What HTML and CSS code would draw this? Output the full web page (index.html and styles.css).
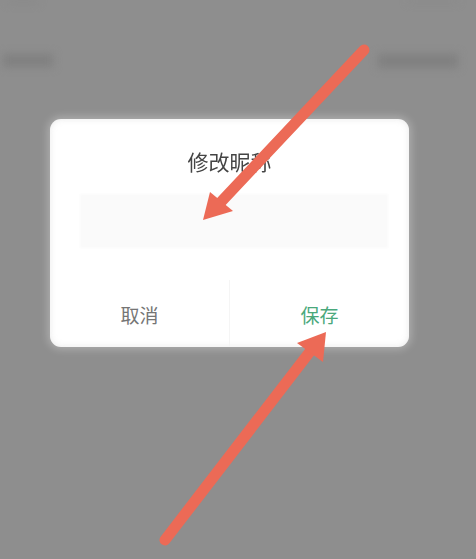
FILE: index.html
```html
<!DOCTYPE html>
<html lang="zh">
<head>
    <meta charset="UTF-8">
    <meta name="viewport" content="width=device-width, initial-scale=1.0">
    <title>修改昵称</title>
    <link rel="stylesheet" href="styles.css">
</head>
<body>
    <div class="page">
        <div class="top-row">
            <span class="smudge smudge-top-left"></span>
            <span class="smudge smudge-top-right"></span>
        </div>
        <div class="setting-row">
            <span class="smudge smudge-label"></span>
            <span class="smudge smudge-value"></span>
        </div>

        <div class="dialog">
            <h1 class="dialog-title">修改昵称</h1>
            <div class="dialog-input"></div>
            <div class="dialog-actions">
                <button class="action action-cancel">取消</button>
                <button class="action action-save">保存</button>
            </div>
        </div>

        <!-- 标注箭头 -->
        <svg class="arrows" viewBox="0 0 476 559" width="476" height="559">
            <line class="arrow-shaft" x1="364" y1="50" x2="220" y2="203"/>
            <polygon class="arrow-head" points="203,220 210,192 233,211"/>
            <line class="arrow-shaft" x1="165" y1="540" x2="312" y2="349"/>
            <polygon class="arrow-head" points="326,332 297,343 323,362"/>
        </svg>
    </div>
</body>
</html>
```

FILE: styles.css
```css
* {
    margin: 0;
    padding: 0;
    box-sizing: border-box;
}

body {
    font-family: "Noto Sans CJK SC", "Noto Sans", sans-serif;
    background: #8e8e8e;
}

.page {
    position: relative;
    width: 476px;
    height: 559px;
    overflow: hidden;
    background: #8e8e8e;
}

.top-row,
.setting-row {
    display: flex;
    justify-content: space-between;
}

.top-row {
    height: 4px;
    padding: 0 18px 0 8px;
}

.setting-row {
    height: 115px;
    padding: 50px 18px 0 3px;
}

.smudge {
    display: block;
    background: #808080;
    filter: blur(4px);
}

.smudge-top-left {
    width: 30px;
    height: 3px;
    background: #868686;
}

.smudge-top-right {
    width: 50px;
    height: 2px;
    background: #868686;
}

.smudge-label {
    width: 50px;
    height: 13px;
}

.smudge-value {
    width: 80px;
    height: 14px;
}

.dialog {
    width: 359px;
    height: 228px;
    margin-left: 50px;
    background: #fff;
    border-radius: 11px;
    box-shadow: 0 0 9px 2px rgba(255, 255, 255, 0.3), inset 0 0 6px rgba(190, 190, 190, 0.35);
    display: flex;
    flex-direction: column;
}

.dialog-title {
    margin-top: 27px;
    height: 30px;
    font-size: 21px;
    font-weight: 400;
    line-height: 30px;
    text-align: center;
    color: #444;
    filter: blur(0.3px);
}

.dialog-input {
    width: 308px;
    height: 54px;
    margin: 18px 0 0 30px;
    background: #fafafa;
    filter: blur(1px);
}

.dialog-actions {
    flex: 1;
    display: flex;
    margin-top: 32px;
}

.action {
    flex: 1;
    border: none;
    background: none;
    font-family: inherit;
    font-size: 19px;
    padding-top: 2px;
}

.action-cancel {
    flex: 0 0 180px;
    color: #757575;
    border-right: 1px solid #f5f5f5;
}

.action-save {
    color: #4aa87c;
}

.arrows {
    position: absolute;
    top: 0;
    left: 0;
    filter: blur(0.7px);
}

.arrow-shaft {
    stroke: #ec6a56;
    stroke-width: 11;
    stroke-linecap: round;
}

.arrow-head {
    fill: #ec6a56;
}
```
